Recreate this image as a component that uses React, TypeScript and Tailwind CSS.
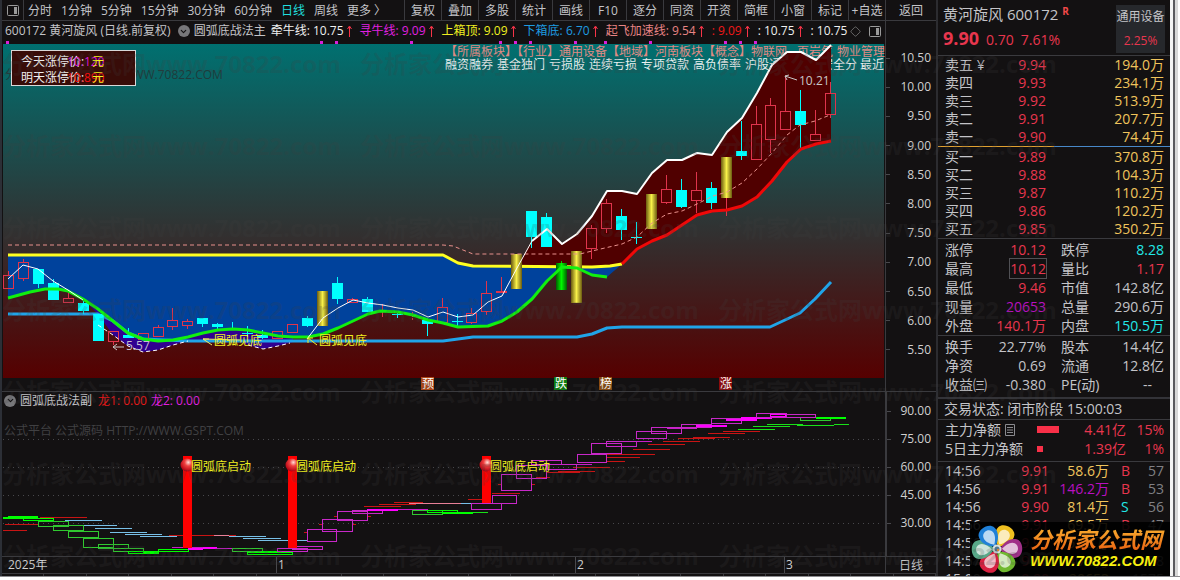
import { ChevronDown, Diamond } from "lucide-react";
import clsx from "clsx";

const periods = ["分时", "1分钟", "5分钟", "15分钟", "30分钟", "60分钟", "日线", "周线", "更多 〉"];
const tools = ["复权", "叠加", "多股", "统计", "画线", "F10", "逐分", "同资", "开资", "简框", "小窗", "标记", "+自选"];

const legend = [
    { label: "牵牛线:", value: "10.75", color: "text-[#f0f0f0]" },
    { label: "寻牛线:", value: "9.09", color: "text-[#e020e0]" },
    { label: "上箱顶:", value: "9.09", color: "text-[#f0f020]" },
    { label: "下箱底:", value: "6.70", color: "text-[#1e9be0]" },
    { label: "起飞加速线:", value: "9.54", color: "text-[#e88484]" },
    { label: ":", value: "9.09", color: "text-[#f01818]" },
    { label: ":", value: "10.75", color: "text-[#f0f0f0]" },
];

const priceAxis = ["10.50", "10.00", "9.50", "9.00", "8.50", "8.00", "7.50", "7.00", "6.50", "6.00", "5.50"];
const subAxis = ["90.00", "75.00", "60.00", "45.00", "30.00"];

// kind, body top, body bottom, high, low
type Candle = [string, number, number, number, number];
const candles: Candle[] = [
    ["r", 275, 289, 271, 289], ["r", 262, 279, 259, 281], ["c", 269, 284, 269, 288], ["c", 283, 300, 279, 300],
    ["r", 298, 303, 293, 303], ["c", 303, 311, 300, 314], ["c", 314, 341, 314, 341], ["r", 331, 342, 331, 345],
    ["c", 335, 338, 328, 338], ["r", 333, 340, 333, 340], ["r", 327, 337, 325, 337], ["r", 320, 327, 308, 330],
    ["r", 321, 326, 319, 329], ["c", 318, 324, 318, 327], ["c", 324, 327, 323, 329], ["c", 328, 329, 322, 329],
    ["c", 333, 334, 326, 337], ["c", 335, 338, 330, 339], ["r", 331, 339, 331, 339], ["r", 324, 333, 324, 333],
    ["c", 318, 326, 316, 327], ["y", 291, 326, 291, 326], ["c", 283, 299, 277, 304], ["r", 299, 303, 298, 303],
    ["c", 299, 312, 297, 312], ["r", 310, 311, 304, 317], ["c", 314, 315, 311, 318], ["r", 317, 318, 312, 320],
    ["c", 320, 324, 318, 336], ["r", 307, 323, 298, 323], ["c", 321, 322, 314, 326], ["r", 313, 323, 308, 324],
    ["r", 293, 312, 281, 315], ["r", 291, 293, 277, 293], ["y", 254, 289, 254, 289], ["c", 211, 237, 211, 248],
    ["c", 217, 247, 213, 247], ["g", 263, 290, 261, 290], ["y", 251, 303, 251, 303], ["r", 228, 249, 225, 259],
    ["r", 203, 229, 199, 233], ["c", 216, 230, 209, 240], ["c", 237, 238, 222, 244], ["y", 194, 229, 194, 229],
    ["r", 189, 203, 175, 204], ["c", 190, 207, 179, 208], ["r", 190, 201, 172, 213], ["c", 188, 203, 182, 209],
    ["y", 157, 198, 157, 216], ["c", 151, 156, 121, 160], ["r", 124, 160, 106, 160], ["r", 105, 140, 98, 153],
    ["r", 111, 130, 76, 130], ["c", 111, 125, 90, 149], ["r", 134, 141, 110, 141], ["r", 93, 115, 82, 118],
];

const greenLine = "8,298 30,292 45,289 58,289 68,291 83,299 98,309 113,321 128,333 143,339 158,341 173,340 188,337 203,333 218,330 233,329 248,330 263,333 278,336 293,337 308,337 323,334 338,328 353,321 368,314 380,311 398,312 413,315 428,320 443,323 458,327 488,326 502,321 517,312 532,299 547,281 562,267 577,268 592,275 607,277";
const yellowLine = "8,255 443,255 458,263 473,266 592,267 610,266 622,264";
const redLine = "622,264 637,249 652,241 667,235 682,225 697,215 712,211 727,210 742,206 757,197 772,181 787,162 801,149 816,144 831,141";
const skyLine = "8,314 98,314 113,321 128,333 143,339 188,341 443,341 458,339 473,337 577,337 592,334 607,328 622,327 770,327 785,320 800,313 815,299 831,282";
const whiteThin = "8,279 23,265 38,269 53,281 68,290 83,300";
const whiteRise = "307,339 323,318 338,308 353,300 368,303 383,305 398,308 413,310 428,317 443,312 458,317 473,315 488,302 502,296 517,268 532,241";
const whiteTop = "532,241 547,229 562,244 577,234 592,216 607,191 622,191 637,194 652,173 667,160 682,160 697,153 712,155 727,132 742,118 757,93 772,65 787,52 801,52 816,60 831,45";
const salmonLine = "8,245 443,245 453,246 468,252 473,254 580,254 592,251 622,244 637,237 652,223 667,214 682,211 697,204 713,196 727,192 742,183 757,169 772,153 787,135 800,125 815,121 830,115";

const dots = [7, 321, 336, 411, 500, 515, 530, 575, 605, 650, 725, 740, 755];

const sectors: [number, string][] = [
    [445, "【所属板块】【行业】通用设备【地域】河南板块【概念】物联网"], [797, "页岩气"], [837, "物业管理"],
];
const concepts: [number, string][] = [
    [445, "融资融券"], [497, "基金独门"], [549, "亏损股"], [589, "连续亏损"], [641, "专项贷款"],
    [693, "高负债率"], [745, "沪股通"], [785, "深股通"], [821, "安全分"], [860, "最近"],
];

const badges = [
    { x: 421, text: "预", fill: "#b04818" },
    { x: 554, text: "跌", fill: "#0c7c10" },
    { x: 599, text: "榜", fill: "#8a4c10" },
    { x: 719, text: "涨", fill: "#8c0c0c" },
];

// x1, y1, x2, y2 of the step boxes
const greenBoxes = [
    [3, 517, 38, 518], [8, 516, 38, 517], [23, 518, 54, 520], [38, 521, 69, 526], [53, 525, 84, 530], [68, 531, 99, 537],
    [83, 538, 114, 547], [98, 544, 129, 548], [113, 548, 144, 551], [128, 551, 159, 553], [143, 551, 159, 552],
    [158, 549, 189, 551], [232, 548, 263, 551], [247, 552, 293, 554], [262, 551, 278, 552], [412, 510, 443, 514], [427, 510, 458, 512],
    [442, 512, 473, 513], [800, 417, 831, 420], [816, 417, 846, 418],
];
const magentaBoxes = [
    [188, 548, 203, 549], [203, 547, 217, 548], [277, 548, 308, 551], [292, 546, 323, 549], [307, 529, 337, 541],
    [322, 519, 353, 531], [337, 511, 368, 520], [352, 510, 383, 513], [367, 509, 398, 510], [471, 503, 502, 509], [492, 495, 517, 503],
    [501, 474, 532, 490], [516, 465, 547, 478], [531, 460, 562, 464], [547, 464, 577, 469], [577, 454, 607, 462],
    [591, 443, 622, 453], [606, 441, 637, 446], [636, 431, 667, 438], [651, 427, 682, 433], [681, 424, 712, 427],
    [696, 425, 727, 426], [711, 418, 742, 423], [726, 419, 757, 420], [741, 417, 772, 418], [756, 413, 787, 417], [770, 414, 786, 416],
    [786, 414, 816, 417],
];
const segments: { stroke: string; lines: number[][] }[] = [
    {
        stroke: "#c81414",
        lines: [
            [3, 530, 27], [5, 524, 38], [40, 517, 87], [169, 535, 236], [394, 502, 423], [379, 504, 416], [364, 506, 401],
            [468, 499, 482], [492, 493, 520], [498, 484, 502], [532, 484, 535], [536, 477, 550], [547, 472, 580], [558, 471, 595], [573, 467, 610],
            [607, 461, 625], [607, 457, 640], [607, 454, 655], [633, 449, 670], [648, 444, 685], [663, 441, 700],
            [678, 438, 715], [693, 437, 730], [708, 433, 745], [723, 431, 760], [304, 532, 308], [319, 524, 323], [352, 524, 356], [334, 516, 338], [367, 516, 371],
        ],
    },
    {
        stroke: "#78c0e8",
        lines: [
            [65, 520, 102], [83, 525, 117], [95, 528, 132], [110, 532, 147], [125, 534, 162], [140, 536, 177],
            [229, 536, 266], [243, 538, 281], [258, 540, 307], [461, 503, 471],
        ],
    },
    { stroke: "#e88098", lines: [[214, 535, 229], [409, 503, 461]] },
    { stroke: "#c81ec8", lines: [[172, 547, 203], [217, 548, 247], [398, 509, 428], [577, 464, 592], [637, 441, 652], [667, 428, 697]] },
    { stroke: "#18e018", lines: [[473, 512, 488], [738, 429, 775], [753, 426, 790], [767, 424, 803], [797, 425, 834], [834, 424, 849]] },
];
const signals = [
    { x: 187, bottom: 548 },
    { x: 292, bottom: 548 },
    { x: 486, bottom: 503 },
];

const sells = [["卖五 ¥", "9.94", "194.0万"], ["卖四", "9.93", "234.1万"], ["卖三", "9.92", "513.9万"], ["卖二", "9.91", "207.7万"], ["卖一", "9.90", "74.4万"]];
const buys = [["买一", "9.89", "370.8万"], ["买二", "9.88", "104.3万"], ["买三", "9.87", "110.2万"], ["买四", "9.86", "120.2万"], ["买五", "9.85", "350.2万"]];

const RED = "text-[#e8364e]";
const CYAN = "text-[#22e8e8]";
const GREY = "text-[#c4c4c8]";
const GOLD = "text-[#f0c45c]";
const PURPLE = "text-[#b810c0]";

const quoteStats = [
    ["涨停", "10.12", RED, "跌停", "8.28", CYAN],
    ["最高", "10.12", RED, "量比", "1.17", RED],
    ["最低", "9.46", RED, "市值", "142.8亿", GREY],
    ["现量", "20653", PURPLE, "总量", "290.6万", GREY],
    ["外盘", "140.1万", RED, "内盘", "150.5万", CYAN],
];
const baseStats = [
    ["换手", "22.77%", GREY, "股本", "14.4亿", GREY],
    ["净资", "0.69", GREY, "流通", "12.8亿", GREY],
    ["收益㈢", "-0.380", GREY, "PE(动)", "--", GREY],
];
const ticks = [
    ["14:56", "9.91", "58.6万", "B", "57"],
    ["14:56", "9.91", "146.2万", "B", "53"],
    ["14:56", "9.90", "81.4万", "S", "56"],
    ["14:56", "9.91", "69.5万", "B", "47"],
    ["14:56", "9.91", "52.3万", "B", "61"],
    ["14:57", "9.90", "40.8万", "S", "38"],
    ["15:00", "9.90", "20653", "", "1575"],
];

function PanelIcon() {
    return (
        <svg width="12" height="11" viewBox="0 0 12 11" className="shrink-0">
            <rect x="0.5" y="0.5" width="11" height="10" rx="1" fill="none" stroke="#9a9a9a" />
            <rect x="7" y="2" width="3" height="7" fill="#9a9a9a" />
        </svg>
    );
}

function UpArrow() {
    return (
        <svg width="5" height="12" viewBox="0 0 5 12" className="shrink-0">
            <path d="M2.5 12V2M0.5 4L2.5 1L4.5 4" fill="none" stroke="#f83448" />
        </svg>
    );
}

function Toggle({ label }: { label: string }) {
    return (
        <button aria-label={label} className="flex size-3 shrink-0 items-center justify-center rounded-full bg-[#77777a]">
            <ChevronDown size={9} strokeWidth={3} className="text-[#131112]" />
        </button>
    );
}

function Toolbar() {
    return (
        <nav className="flex h-[21px] items-stretch border-b border-[#3a3a3e] leading-[19px] text-[#c4c4c8]">
            <button aria-label="侧栏" className="flex w-[22px] items-center justify-center border-r border-[#3a3a3e]">
                <PanelIcon />
            </button>
            <div className="flex flex-1 gap-[9px] overflow-hidden pl-1">
                {periods.map(p => (
                    <button key={p} className={clsx("shrink-0", p === "日线" && "text-[#20dede]")}>{p}</button>
                ))}
            </div>
            {tools.map(t => (
                <button key={t} className="w-[37px] border-l border-[#3a3a3e] whitespace-nowrap">{t}</button>
            ))}
            <button className="w-[51px] border-l border-[#3a3a3e]">返回</button>
        </nav>
    );
}

function Legend() {
    return (
        <div className="flex h-5 items-center overflow-hidden whitespace-nowrap pl-[3px] pr-1 text-[#c4c4c8]">
            <span className="shrink-0">600172 黄河旋风 (日线.前复权)</span>
            <span className="ml-[7px] flex shrink-0 items-center gap-1">
                <Toggle label="展开主图指标" />
                圆弧底战法主
            </span>
            {legend.map((l, i) => (
                <span key={i} className={clsx("flex shrink-0 items-center gap-[3px]", i === 0 ? "ml-[5px]" : "ml-2", l.color)}>
                    <span>{l.label} {l.value}</span>
                    <UpArrow />
                </span>
            ))}
            <span className="ml-2 shrink-0 text-[#f0f0f0]">: 10.75</span>
            <Diamond size={11} strokeWidth={1.5} className="ml-[3px] shrink-0 text-[#8a8a8a]" />
            <span className="ml-auto shrink-0"><PanelIcon /></span>
        </div>
    );
}

function CandleShape({ candle, x }: { candle: Candle; x: number }) {
    const [kind, top, bottom, high, low] = candle;
    const wick = kind === "c" ? "#00ffff" : kind === "g" ? "#00d000" : "#e0344c";
    if (kind === "r") {
        return (
            <g fill="none" stroke={wick} shapeRendering="crispEdges">
                <path d={`M${x} ${high}V${top}M${x} ${bottom}V${low}`} />
                <rect x={x - 5} y={top + 0.5} width="10" height={bottom - top - 1} />
            </g>
        );
    }
    return (
        <g shapeRendering="crispEdges">
            <path d={`M${x} ${high}V${low}`} stroke={wick} />
            <rect x={x - 5.5} y={top} width="11" height={bottom - top} fill={kind === "c" ? "#00ffff" : kind === "g" ? "url(#greenBar)" : "url(#goldBar)"} />
        </g>
    );
}

function MainChart() {
    return (
        <svg viewBox="2 41 883 350" preserveAspectRatio="none" className="block h-[350px] w-full" fontSize="12">
            <defs>
                <linearGradient id="sky" x1="0" y1="0" x2="0" y2="1">
                    <stop offset="0" stopColor="#007070" />
                    <stop offset="0.5" stopColor="#2c3838" />
                    <stop offset="1" stopColor="#560000" />
                </linearGradient>
                <linearGradient id="goldBar">
                    <stop offset="0" stopColor="#6a5a10" />
                    <stop offset="0.5" stopColor="#f8f048" />
                    <stop offset="1" stopColor="#6a5a10" />
                </linearGradient>
                <linearGradient id="greenBar">
                    <stop offset="0" stopColor="#006000" />
                    <stop offset="0.5" stopColor="#00f800" />
                    <stop offset="1" stopColor="#006000" />
                </linearGradient>
            </defs>
            <rect x="3" y="44" width="881" height="334" fill="url(#sky)" />
            {dots.map(x => <rect key={x} x={x - 1} y="41" width="3" height="3" fill="#d820d8" />)}

            <text x="5" y="79" fill="#1f3c3c">分析家公式网 HTTP://WWW.70822.COM</text>
            <g fill="#e08a84">
                {sectors.map(([x, text]) => <text key={x} x={x} y="56">{text}</text>)}
            </g>
            <g fill="#e8f0f0">
                {concepts.map(([x, text]) => <text key={x} x={x} y="69">{text}</text>)}
            </g>

            <polygon points={`8,255 ${greenLine} 622,264 592,267 473,266 458,263 443,255`} fill="#00429c" />
            <polygon points="83,299 98,309 113,321 128,333 143,339 158,341 173,340 188,337 203,333 218,330 233,329 248,330 263,333 278,336 293,337 293,342 278,346 263,349 248,345 238,341 188,341 173,345 158,350 143,352 128,346 113,335 98,314" fill="#300090" />
            <polygon points={`517,267 ${whiteTop} 831,141 816,144 801,149 787,162 772,181 757,197 742,206 727,210 712,211 697,215 682,225 667,235 652,241 637,249 622,264 592,267`} fill="#500000" />

            <g fill="none" strokeLinejoin="round">
                <polyline points={skyLine} stroke="#20a4e8" strokeWidth="3" />
                <polyline points={yellowLine} stroke="#ffff20" strokeWidth="3" />
            </g>
            {candles.map((c, i) => <CandleShape key={i} candle={c} x={Math.round(8 + i * 14.95) + 0.5} />)}
            <g fill="none" strokeLinejoin="round">
                <polyline points={salmonLine} stroke="#e8908c" strokeDasharray="4 3" />
                <polyline points={redLine} stroke="#f00808" strokeWidth="3" />
                <polyline points={greenLine} stroke="#10f010" strokeWidth="3" />
                <polyline points={whiteThin} stroke="#ffffff" />
                <polyline points="98,325 113,335 128,346 143,352 158,350 173,345 188,341" stroke="#ffffff" strokeDasharray="4 3" />
                <polyline points="248,345 263,349 278,346 290,343" stroke="#ffffff" strokeDasharray="4 3" />
                <polyline points={whiteRise} stroke="#ffffff" />
                <polyline points={whiteTop} stroke="#ffffff" strokeWidth="2" />
                <path d="M124 347H113M117 344L113 347L117 350" stroke="#c8c8c8" />
                <path d="M797 80L785 76M787 80L785 76L789 75" stroke="#c8c8c8" />
                <path d="M240 340L203 339M203 339L212 345M203 339H209" stroke="#f0f060" />
                <path d="M317 345L308 338M308 343V338H313" stroke="#f0f020" />
            </g>
            <text x="126" y="350" fill="#c8c0d0">5.57</text>
            <text x="799" y="85" fill="#c8c8c8">10.21</text>
            <text x="214" y="345" fill="#f0f020">圆弧见底</text>
            <text x="319" y="345" fill="#f0f020">圆弧见底</text>

            {badges.map(b => (
                <g key={b.text}>
                    <rect x={b.x} y="377" width="13" height="13" fill={b.fill} />
                    <text x={b.x + 1} y="388" fill="#ffffff">{b.text}</text>
                </g>
            ))}

            <rect x="11.5" y="50.5" width="124" height="35" fill="#380c08" stroke="#d8d8d8" />
            <g fill="#f0f0f0">
                <text x="21" y="66">今天涨停价:</text>
                <text x="21" y="82">明天涨停价:</text>
            </g>
            <text x="67" y="66" fill="#d818d8">10.120</text>
            <text x="67" y="82" fill="#f01010">10.890</text>
            <g fill="#f0f020">
                <text x="92" y="66">元</text>
                <text x="92" y="82">元</text>
            </g>
        </svg>
    );
}

function SubChart() {
    return (
        <svg viewBox="2 409 883 147" preserveAspectRatio="none" className="block h-[147px] w-full" fontSize="12">
            <defs>
                <radialGradient id="ball" cx="0.6" cy="0.3" r="0.7">
                    <stop offset="0" stopColor="#ffe0d8" />
                    <stop offset="0.4" stopColor="#f04040" />
                    <stop offset="1" stopColor="#b00010" />
                </radialGradient>
            </defs>
            <text x="4" y="435" fill="#404042">公式平台 公式源码 HTTP://WWW.GSPT.COM</text>
            <g stroke="#48484c" strokeDasharray="1 4">
                {[439, 467, 495, 523].map(y => <path key={y} d={`M3 ${y}.5H883`} />)}
            </g>
            <g fill="none" shapeRendering="crispEdges">
                {segments.map(s => (
                    <path key={s.stroke} stroke={s.stroke} d={s.lines.map(([x1, y, x2]) => `M${x1} ${y}.5H${x2}`).join("")} />
                ))}
                {greenBoxes.map(([x1, y1, x2, y2], i) => (
                    <rect key={i} x={x1 + 0.5} y={y1 + 0.5} width={x2 - x1 - 1} height={y2 - y1} stroke={y2 - y1 < 3 ? "#00ff00" : "#30c830"} />
                ))}
                {magentaBoxes.map(([x1, y1, x2, y2], i) => (
                    <rect key={i} x={x1 + 0.5} y={y1 + 0.5} width={x2 - x1 - 1} height={y2 - y1} stroke={y2 - y1 < 3 ? "#ff00ff" : "#c828c8"} />
                ))}
            </g>
            {signals.map(s => (
                <g key={s.x}>
                    <rect x={s.x - 4} y="456" width="9" height={s.bottom - 456} fill="#ff0000" />
                    <circle cx={s.x} cy="465" r="6.5" fill="url(#ball)" />
                    <text x={s.x + 4} y="471" fill="#f0f020">圆弧底启动</text>
                </g>
            ))}
        </svg>
    );
}

function AxisLabels({ labels, className }: { labels: string[]; className: string }) {
    return (
        <div className={clsx("flex flex-col justify-between leading-4 text-[#d0d0d0]", className)}>
            {labels.map(l => (
                <div key={l} className="flex items-center justify-between pr-[5px]">
                    <span className="h-px w-1 bg-[#48484c]" />
                    {l}
                </div>
            ))}
        </div>
    );
}

function DepthTable({ rows, label }: { rows: string[][]; label: string }) {
    return (
        <table aria-label={label} className="w-full table-fixed whitespace-nowrap leading-[18px]">
            <tbody>
                {rows.map(([name, price, volume]) => (
                    <tr key={name}>
                        <th scope="row" className="w-[52px] text-left font-normal">{name}</th>
                        <td className={clsx("w-[49px] text-right", RED)}>{price}</td>
                        <td className={clsx("text-right", GOLD)}>{volume}</td>
                    </tr>
                ))}
            </tbody>
        </table>
    );
}

function StatsTable({ rows, label }: { rows: string[][]; label: string }) {
    return (
        <table aria-label={label} className="w-full table-fixed whitespace-nowrap leading-[19px]">
            <tbody>
                {rows.map(([a, av, ac, b, bv, bc]) => (
                    <tr key={a}>
                        <th scope="row" className="w-[45px] text-left font-normal">{a}</th>
                        <td className={clsx("w-[56px] text-right", ac)}>
                            <span className={clsx(a === "最高" && "outline outline-[#505054]")}>{av}</span>
                        </td>
                        <th scope="row" className="w-[57px] pl-[15px] text-left font-normal">{b}</th>
                        <td className={clsx("text-right", bc, bv === "--" && "pr-3")}>{bv}</td>
                    </tr>
                ))}
            </tbody>
        </table>
    );
}

function Flower() {
    const petals = ["#f0c020", "#a03088", "#70b830", "#d82040", "#58a888", "#2080d8"];
    return (
        <svg width="54" height="52" viewBox="-27 -26 54 52" className="shrink-0">
            {petals.map((c, i) => (
                <g key={c} transform={`rotate(${28 + i * 60})`}>
                    <path d="M0 -3C-7 -7 -11 -14 -9 -20C-7 -27 7 -27 9 -20C11 -14 7 -7 0 -3Z" fill={c} />
                    <path d="M0 -5C-4 -9 -7 -14 -5 -18C-3 -22 3 -22 5 -18C7 -14 4 -9 0 -5Z" fill="#ffffff" opacity="0.7" />
                </g>
            ))}
            <circle r="4.5" fill="#d8e0e0" />
            <circle r="2.5" fill="#507890" />
            <circle cx="1" cy="1" r="1.2" fill="#e08030" />
        </svg>
    );
}

function QuotePanel() {
    return (
        <aside className="relative flex w-[234px] shrink-0 flex-col overflow-hidden border-l-2 border-[#2c2c30] text-sm text-[#c4c4c8]">
            <header className="flex h-14 justify-between border-b border-[#3a3a3e] px-[5px]">
                <div className="pt-1">
                    <h1 className="text-[15px] leading-5">黄河旋风 600172 <sup className="text-[10px] font-bold text-[#f04848]">R</sup></h1>
                    <p className={clsx("mt-0.5 flex items-baseline gap-[7px] leading-6", RED)}>
                        <strong className="text-lg leading-6">9.90</strong>
                        <span>0.70</span>
                        <span>7.61%</span>
                    </p>
                </div>
                <div className="mt-[5px] flex h-12 w-[49px] flex-col justify-between bg-[#26282c] py-0.5 text-center text-xs leading-5">
                    <span>通用设备</span>
                    <span className={RED}>2.25%</span>
                </div>
            </header>
            <div className="pl-[7px] pr-1.5">
                <DepthTable rows={sells} label="卖盘" />
            </div>
            <div className="flex h-px">
                <span className="flex-1 bg-[#e0a030]" />
                <span className="flex-1 bg-[#4888c8]" />
            </div>
            <div className="border-b border-[#3a3a3e] pl-[7px] pr-1.5 pt-px">
                <DepthTable rows={buys} label="买盘" />
            </div>
            <div className="border-b border-[#3a3a3e] pl-[7px] pr-1.5 pt-px">
                <StatsTable rows={quoteStats} label="行情" />
            </div>
            <div className="border-b-2 border-[#333338] pb-[3px] pl-[7px] pr-1.5 pt-px">
                <StatsTable rows={baseStats} label="基本面" />
            </div>
            <p className="border-b border-[#3a3a3e] pl-1.5 leading-5">交易状态: 闭市阶段 15:00:03</p>
            <div className="border-b border-[#3a3a3e] pb-[3px] pl-[7px] pr-1.5 leading-[19px]">
                <div className="flex items-center">
                    <span className="flex w-[92px] items-center gap-[3px]">
                        主力净额
                        <svg width="12" height="12" viewBox="0 0 12 12">
                            <path d="M1.5 0.5H10.5V11.5H1.5ZM3 3.5H9M3 6H9M3 8.5H9" fill="none" stroke="#8a8a8e" />
                        </svg>
                    </span>
                    <span className="h-[7px] w-[22px] bg-[#f83048]" />
                    <span className={clsx("flex-1 text-right", RED)}>4.41亿</span>
                    <span className={clsx("w-[38px] text-right", RED)}>15%</span>
                </div>
                <div className="flex items-center">
                    <span className="w-[92px]">5日主力净额</span>
                    <span className="size-[6px] bg-[#f83048]" />
                    <span className={clsx("flex-1 text-right", RED)}>1.39亿</span>
                    <span className={clsx("w-[38px] text-right", RED)}>1%</span>
                </div>
            </div>
            <div className="h-0 grow overflow-hidden pl-[7px] pr-1.5">
                <table aria-label="分时成交" className="w-full table-fixed whitespace-nowrap leading-[18px]">
                    <tbody>
                        {ticks.map(([time, price, volume, side, count], i) => (
                            <tr key={i}>
                                <td className="w-[52px]">{time}</td>
                                <td className={clsx("w-[52px] text-right", RED)}>{price}</td>
                                <td className={clsx("w-[60px] text-right", i === 1 ? PURPLE : GOLD)}>{volume}</td>
                                <td className={clsx("w-[22px] pl-3", side === "S" ? CYAN : RED)}>{side}</td>
                                <td className="text-right text-[#808084]">{count}</td>
                            </tr>
                        ))}
                    </tbody>
                </table>
            </div>
            <a href="#home" className="absolute bottom-0 right-0 flex h-[54px] w-[200px] items-center bg-black/90">
                <Flower />
                <span className="flex-1 whitespace-nowrap pl-1.5 font-bold italic">
                    <span className="block bg-gradient-to-b from-[#f8b030] to-[#e86010] bg-clip-text text-[22px] leading-6 text-transparent">分析家公式网</span>
                    <span className="block font-['Liberation_Sans',sans-serif] text-[15px] leading-5 text-[#f8f010]">WWW.70822.COM</span>
                </span>
            </a>
        </aside>
    );
}

function Watermark() {
    return (
        <div aria-hidden="true" className="pointer-events-none absolute inset-0 flex flex-col justify-between overflow-hidden pb-1 pt-12 text-2xl font-bold leading-8 text-[#404040]/20">
            {[0, 1, 2, 3, 4, 5, 6].map(r => (
                <div key={r} className="flex whitespace-nowrap">
                    {[0, 1, 2].map(c => <span key={c} className="w-[358px] shrink-0">分析家公式网www.70822.com</span>)}
                </div>
            ))}
        </div>
    );
}

export default function App() {
    return (
        <div className="min-h-screen bg-white pb-[3px] font-['Open_Sans','Noto_Sans_CJK_SC',sans-serif] text-xs">
            <div className="flex border-b border-[#8a8a8e]">
                <main className="relative flex min-w-0 flex-1 border-l-2 border-[#2c2f36] bg-[#131112]">
                    <div className="min-w-0 flex-1">
                        <Toolbar />
                        <div className="flex">
                            <div className="min-w-0 flex-1">
                                <Legend />
                                <MainChart />
                            </div>
                            <div className="w-[51px] border-l border-[#3a3a3e]">
                                <AxisLabels labels={priceAxis} className="mt-[29px] h-[308px]" />
                            </div>
                        </div>
                        <div className="flex border-y border-[#3a3a3e]">
                            <div className="min-w-0 flex-1">
                                <div className="flex h-[17px] items-center gap-1 pl-0.5 text-[#c4c4c8]">
                                    <Toggle label="展开副图指标" />
                                    <span>圆弧底战法副</span>
                                    <span className="ml-0.5 text-[#e81818]">龙1: 0.00</span>
                                    <span className="text-[#e020e0]">龙2: 0.00</span>
                                </div>
                                <SubChart />
                            </div>
                            <div className="w-[51px] border-l-2 border-[#3a3a3e]">
                                <AxisLabels labels={subAxis} className="mt-[11px] h-[128px]" />
                            </div>
                        </div>
                        <div className="flex h-4 leading-[15px] text-[#d0d0d0]">
                            <div className="grid flex-1 grid-cols-[274fr_299fr_209fr_101fr]">
                                <span className="pl-1.5">2025年</span>
                                <span className="border-l border-[#48484c] pl-px">1</span>
                                <span className="border-l border-[#48484c] pl-px">2</span>
                                <span className="border-l border-[#48484c] pl-px">3</span>
                            </div>
                            <button className="w-[51px] border-l border-[#3a3a3e] text-[#c4c4c8]">日线</button>
                        </div>
                        <div className="grid h-[3px] grid-cols-[repeat(22,1fr)] border-t border-[#3a3a3e]">
                            {Array.from({ length: 22 }, (_, i) => <span key={i} className="border-r border-[#3a3a3e]" />)}
                        </div>
                    </div>
                    <QuotePanel />
                    <Watermark />
                </main>
                <div className="w-[3px] bg-[#f4f4f4]" />
                <div className="w-[2px] bg-[#5a5a5e]" />
                <div className="w-[3px] bg-[#d8d8d8]" />
                <div className="w-[2px] bg-white" />
            </div>
        </div>
    );
}
